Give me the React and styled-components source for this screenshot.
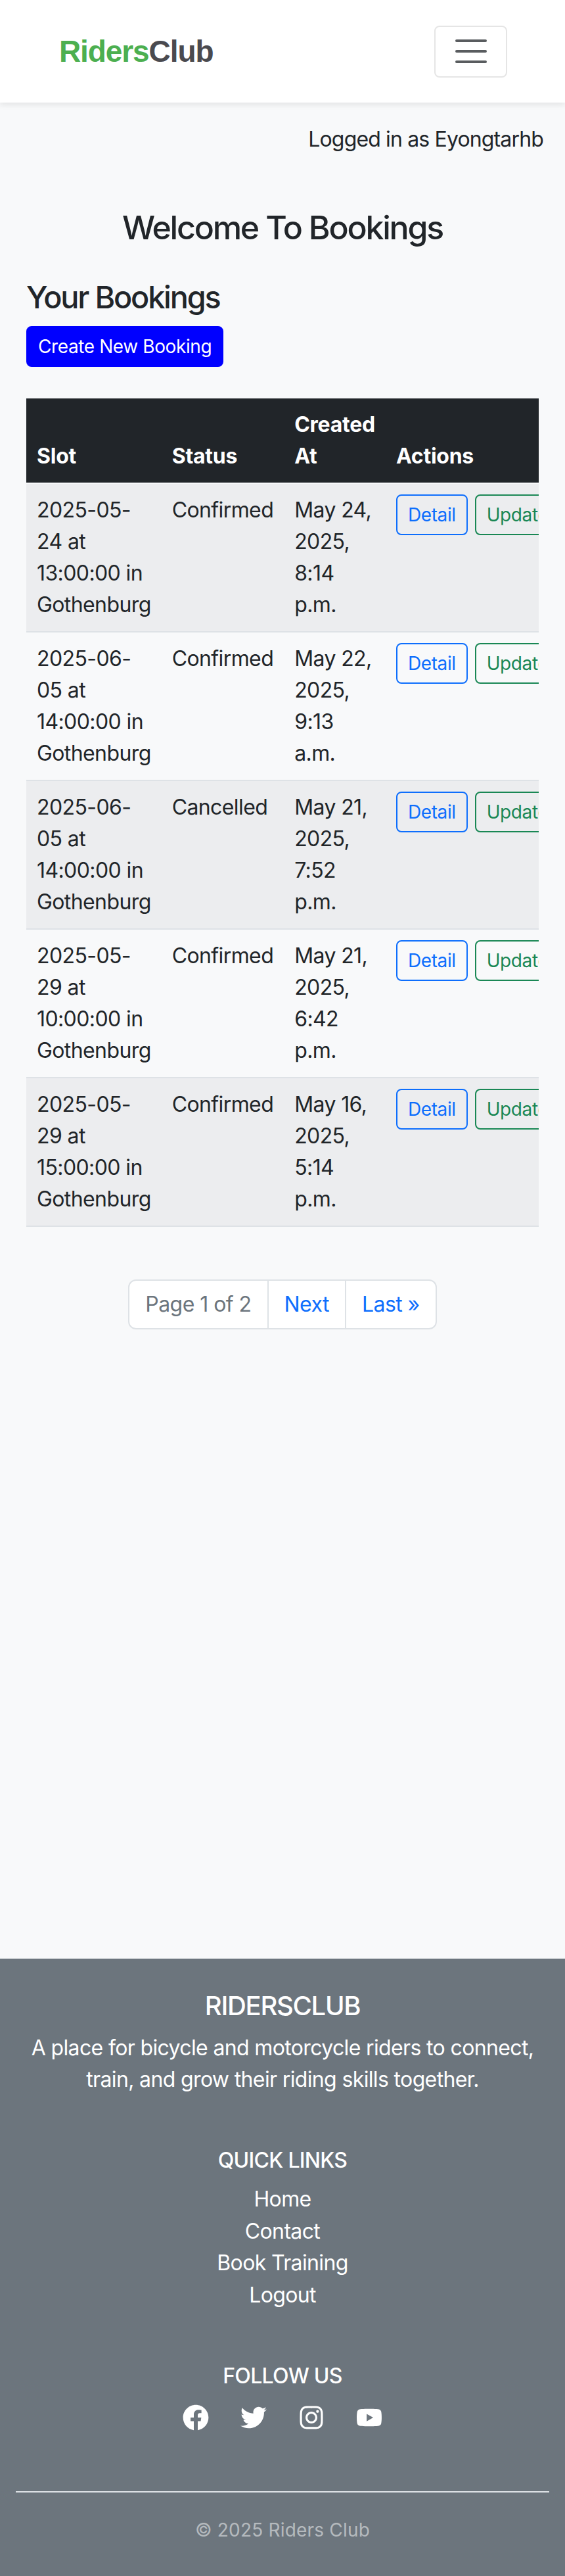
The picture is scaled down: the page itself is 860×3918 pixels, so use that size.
import React from "react";
import styled, { createGlobalStyle } from "styled-components";
import { FaFacebook, FaTwitter, FaInstagram, FaYoutube } from "react-icons/fa";

const bookings = [
  { slot: "2025-05-24 at 13:00:00 in Gothenburg", status: "Confirmed", created: "May 24, 2025, 8:14 p.m." },
  { slot: "2025-06-05 at 14:00:00 in Gothenburg", status: "Confirmed", created: "May 22, 2025, 9:13 a.m." },
  { slot: "2025-06-05 at 14:00:00 in Gothenburg", status: "Cancelled", created: "May 21, 2025, 7:52 p.m." },
  { slot: "2025-05-29 at 10:00:00 in Gothenburg", status: "Confirmed", created: "May 21, 2025, 6:42 p.m." },
  { slot: "2025-05-29 at 15:00:00 in Gothenburg", status: "Confirmed", created: "May 16, 2025, 5:14 p.m." },
];

const App = () => {
  return (
    <>
      <GlobalStyle />
      <Page>
        <Navbar>
          <Logo>
            <LogoAccent>Riders</LogoAccent>Club
          </Logo>
          <Toggler aria-label="Toggle navigation">
            <svg width="60" height="60" viewBox="0 0 30 30">
              <path
                d="M4 7h22M4 15h22M4 23h22"
                stroke="rgba(33,37,41,0.75)"
                strokeWidth="2"
                strokeLinecap="round"
              />
            </svg>
          </Toggler>
        </Navbar>

        <Main>
          <LoggedIn>Logged in as Eyongtarhb</LoggedIn>
          <Title>Welcome To Bookings</Title>
          <Heading>Your Bookings</Heading>
          <CreateButton>Create New Booking</CreateButton>

          <TableWrap>
            <Table>
              <thead>
                <tr>
                  <Th>Slot</Th>
                  <Th>Status</Th>
                  <Th>Created At</Th>
                  <Th>Actions</Th>
                </tr>
              </thead>
              <tbody>
                {bookings.map((b, i) => (
                  <Row key={i} $striped={i % 2 === 0}>
                    <Td>{b.slot}</Td>
                    <Td>{b.status}</Td>
                    <Td>{b.created}</Td>
                    <ActionCell>
                      <ActionButton $color="#0d6efd">Detail</ActionButton>
                      <ActionButton $color="#198754">Update</ActionButton>
                      <ActionButton $color="#dc3545">Cancel</ActionButton>
                    </ActionCell>
                  </Row>
                ))}
              </tbody>
            </Table>
          </TableWrap>

          <Pagination>
            <PageItem $muted>Page 1 of 2</PageItem>
            <PageItem>Next</PageItem>
            <PageItem>Last »</PageItem>
          </Pagination>
        </Main>

        <Footer>
          <FooterBrand>RIDERSCLUB</FooterBrand>
          <FooterText>
            A place for bicycle and motorcycle riders to connect, train, and grow their riding skills together.
          </FooterText>

          <FooterHeading>QUICK LINKS</FooterHeading>
          <FooterLinks>
            <FooterLink>Home</FooterLink>
            <FooterLink>Contact</FooterLink>
            <FooterLink>Book Training</FooterLink>
            <FooterLink>Logout</FooterLink>
          </FooterLinks>

          <FooterHeading>FOLLOW US</FooterHeading>
          <Socials>
            <FaFacebook />
            <FaTwitter />
            <FaInstagram />
            <FaYoutube />
          </Socials>

          <Divider />
          <Copyright>© 2025 Riders Club</Copyright>
        </Footer>
      </Page>
    </>
  );
};

//STYLING

const GlobalStyle = createGlobalStyle`
  * {
    box-sizing: border-box;
  }

  body {
    margin: 0;
    background: #f8f9fa;
    color: #212529;
    font-family: Inter, "Liberation Sans", sans-serif;
    font-size: 32px;
    line-height: 48px;
    letter-spacing: -0.85px;
  }
`;

const Page = styled.div`
  display: flex;
  flex-direction: column;
  min-height: 100vh;
`;

const Navbar = styled.nav`
  display: flex;
  align-items: center;
  justify-content: space-between;
  height: 156px;
  padding: 0 88px 0 90px;
  background: #fff;
  box-shadow: 0 4px 8px rgba(0, 0, 0, 0.08);
`;

const Logo = styled.div`
  font-family: "Liberation Sans", Arial, sans-serif;
  font-size: 46px;
  font-weight: 700;
  letter-spacing: -1.1px;
  color: #4a4a4f;
`;

const LogoAccent = styled.span`
  color: #4caf50;
`;

const Toggler = styled.button`
  display: flex;
  align-items: center;
  justify-content: center;
  width: 111px;
  height: 79px;
  padding: 0;
  background: transparent;
  border: 2px solid rgba(0, 0, 0, 0.1);
  border-radius: 8px;
`;

const Main = styled.main`
  flex: 1;
  padding: 32px 40px 0;
`;

const LoggedIn = styled.p`
  margin: 0 -7px 0 0;
  text-align: right;
`;

const Title = styled.h2`
  margin: 80px 0 0;
  font-size: 50px;
  font-weight: 500;
  line-height: 60px;
  letter-spacing: -2.2px;
  text-align: center;
`;

const Heading = styled.h3`
  margin: 48px 0 16px;
  font-size: 46.8px;
  font-weight: 500;
  line-height: 56px;
  letter-spacing: -2.2px;
`;

const CreateButton = styled.button`
  display: block;
  padding: 8px 16px;
  background: #0000ff;
  border: 2px solid #0000ff;
  border-radius: 8px;
  color: #fff;
  font-family: inherit;
  font-size: 28px;
  line-height: 42px;
  letter-spacing: -0.4px;
`;

const TableWrap = styled.div`
  margin-top: 48px;
  overflow: hidden;
`;

const Table = styled.table`
  width: 100%;
  border-collapse: collapse;
`;

const Th = styled.th`
  padding: 16px;
  background: #212529;
  border-bottom: 2px solid #f8f9fa;
  color: #fff;
  font-weight: 700;
  letter-spacing: -0.25px;
  text-align: left;
  vertical-align: bottom;
`;

const Row = styled.tr`
  background: ${(p) => (p.$striped ? "#ecedef" : "transparent")};
  border-bottom: 2px solid #dee2e6;
`;

const Td = styled.td`
  padding: 16px;
  letter-spacing: -0.6px;
  vertical-align: top;
`;

const ActionCell = styled(Td)`
  white-space: nowrap;
`;

const ActionButton = styled.button`
  margin-right: 11px;
  padding: 8px 16px;
  background: transparent;
  border: 2px solid ${(p) => p.$color};
  border-radius: 8px;
  color: ${(p) => p.$color};
  font-family: inherit;
  font-size: 28px;
  line-height: 42px;
  letter-spacing: -0.4px;
`;

const Pagination = styled.div`
  display: flex;
  justify-content: center;
  margin-top: 80px;
`;

const PageItem = styled.span`
  margin-left: -2px;
  padding: 12px 24px;
  background: #fff;
  border: 2px solid #dee2e6;
  color: ${(p) => (p.$muted ? "#6c757d" : "#0d6efd")};
  letter-spacing: -0.55px;

  &:first-child {
    margin-left: 0;
    border-radius: 12px 0 0 12px;
  }

  &:last-child {
    border-radius: 0 12px 12px 0;
  }
`;

const Footer = styled.footer`
  padding: 48px 24px 49px;
  background: #6c757d;
  color: #fff;
  text-align: center;
  letter-spacing: -0.64px;
`;

const FooterBrand = styled.h5`
  margin: 0 0 16px;
  font-size: 40px;
  font-weight: 500;
  line-height: 48px;
  letter-spacing: -1.3px;
`;

const FooterText = styled.p`
  margin: 0;
`;

const FooterHeading = styled.h6`
  margin: 80px 0 16px;
  font-size: 32px;
  font-weight: 500;
  line-height: 38px;
  letter-spacing: -0.7px;
`;

const FooterLinks = styled.div`
  display: flex;
  flex-direction: column;
`;

const FooterLink = styled.span`
  color: #fff;
  line-height: 48.5px;
`;

const Socials = styled.div`
  display: flex;
  justify-content: center;
  gap: 48px;
  margin-top: 24px;
  font-size: 40px;
  line-height: 1;
`;

const Divider = styled.hr`
  margin: 92px 0 0;
  border: 0;
  border-top: 2px solid #dee2e6;
`;

const Copyright = styled.p`
  margin: 36px 0 0;
  color: rgba(255, 255, 255, 0.5);
  font-size: 28px;
  line-height: 42px;
  letter-spacing: 0.2px;
`;

export default App;
